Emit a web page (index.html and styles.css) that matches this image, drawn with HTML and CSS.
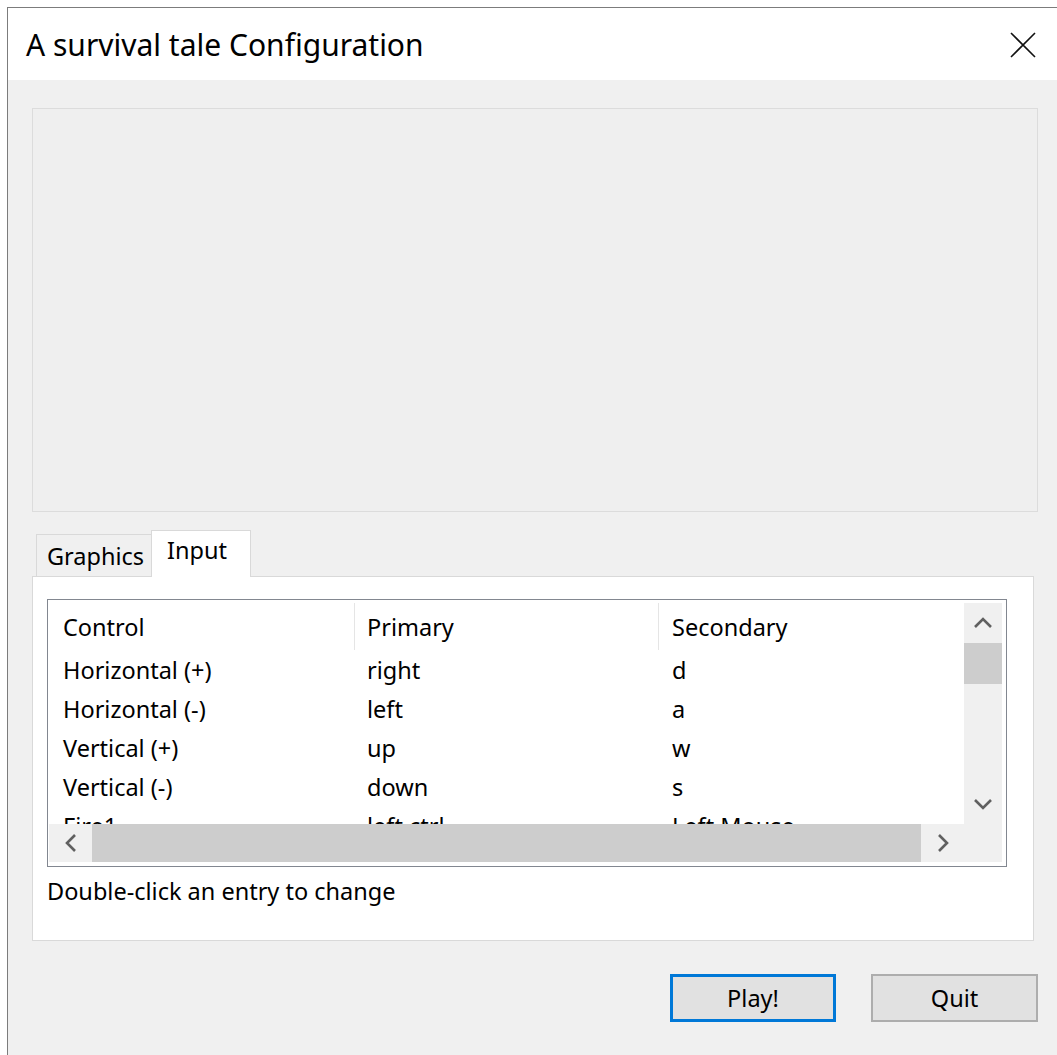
FILE: index.html
```html
<!DOCTYPE html>
<html lang="en">
<head>
<meta charset="utf-8">
<title>A survival tale Configuration</title>
<link rel="stylesheet" href="styles.css">
</head>
<body>
<div class="window">
  <div class="titlebar">
    <span class="title">A survival tale Configuration</span>
    <svg class="close" width="26" height="26" viewBox="0 0 26 26">
      <path d="M1 1 L25 25 M25 1 L1 25" stroke="#111" stroke-width="1.6" fill="none"/>
    </svg>
  </div>
  <div class="client">
    <div class="banner"></div>

    <div class="tabs">
      <div class="tabstrip">
        <div class="tab">Graphics</div>
        <div class="tab active">Input</div>
      </div>
      <div class="tabpage">
        <div class="listview">
          <div class="lv-body">
            <div class="lv-content">
              <div class="lv-row lv-head">
                <div class="cell c1">Control</div>
                <div class="cell c2">Primary</div>
                <div class="cell c3">Secondary</div>
              </div>
              <div class="lv-row">
                <div class="cell c1">Horizontal (+)</div>
                <div class="cell c2">right</div>
                <div class="cell c3">d</div>
              </div>
              <div class="lv-row">
                <div class="cell c1">Horizontal (-)</div>
                <div class="cell c2">left</div>
                <div class="cell c3">a</div>
              </div>
              <div class="lv-row">
                <div class="cell c1">Vertical (+)</div>
                <div class="cell c2">up</div>
                <div class="cell c3">w</div>
              </div>
              <div class="lv-row">
                <div class="cell c1">Vertical (-)</div>
                <div class="cell c2">down</div>
                <div class="cell c3">s</div>
              </div>
              <div class="lv-row">
                <div class="cell c1">Fire1</div>
                <div class="cell c2">left ctrl</div>
                <div class="cell c3">Left Mouse</div>
              </div>
            </div>
            <div class="vscroll">
              <div class="sb-btn v">
                <svg width="20" height="12" viewBox="0 0 20 12"><path d="M2 10 L10 2 L18 10" stroke="#606060" stroke-width="2.6" fill="none"/></svg>
              </div>
              <div class="vthumb"></div>
              <div class="vtrack"></div>
              <div class="sb-btn v">
                <svg width="20" height="12" viewBox="0 0 20 12"><path d="M2 2 L10 10 L18 2" stroke="#606060" stroke-width="2.6" fill="none"/></svg>
              </div>
            </div>
            <div class="hscroll">
              <div class="sb-btn h">
                <svg width="12" height="20" viewBox="0 0 12 20"><path d="M10 2 L2 10 L10 18" stroke="#606060" stroke-width="2.6" fill="none"/></svg>
              </div>
              <div class="hthumb"></div>
              <div class="sb-btn h">
                <svg width="12" height="20" viewBox="0 0 12 20"><path d="M2 2 L10 10 L2 18" stroke="#606060" stroke-width="2.6" fill="none"/></svg>
              </div>
            </div>
            <div class="corner"></div>
          </div>
        </div>
        <p class="hint">Double-click an entry to change</p>
      </div>
    </div>

    <div class="buttons">
      <button class="btn default">Play!</button>
      <button class="btn">Quit</button>
    </div>
  </div>
</div>
</body>
</html>
```

FILE: styles.css
```css
html, body {
  margin: 0;
  height: 100%;
  background: #ffffff;
  overflow: hidden;
}

body {
  font-family: "Noto Sans", "Open Sans", sans-serif;
  font-size: 23.5px;
  color: #000;
}

.window {
  margin: 7px 0 0 7px;
  height: calc(100% - 7px);
  border-left: 1px solid #7c7c7c;
  border-top: 1px solid #7c7c7c;
  display: flex;
  flex-direction: column;
}

/* caption bar */
.titlebar {
  height: 72px;
  flex: none;
  background: #ffffff;
  display: flex;
  align-items: center;
  justify-content: space-between;
  padding: 0 21px 0 18px;
}

.title {
  font-size: 30px;
  color: #000;
}

.close {
  display: block;
  margin-top: 2px;
}

/* dialog client area */
.client {
  flex: 1;
  background: #f0f0f0;
  padding: 28px 0 0 24px;
}

.banner {
  width: 1004px;
  height: 402px;
  border: 1px solid #dcdcdc;
  background: #efefef;
}

/* tab control */
.tabs {
  margin-top: 18px;
}

.tabstrip {
  display: flex;
  align-items: flex-end;
  height: 46px;
  padding-left: 4px;
}

.tab {
  box-sizing: border-box;
  height: 42px;
  width: 115px;
  border: 1px solid #d9d9d9;
  border-bottom: none;
  border-right: none;
  background: #f0f0f0;
  padding: 5px 0 0 10px;
  white-space: nowrap;
}

.tab.active {
  width: 100px;
  height: 47px;
  margin-bottom: -1px;
  background: #ffffff;
  border-right: 1px solid #d9d9d9;
  padding: 3px 0 0 15px;
  position: relative;
  z-index: 1;
}

.tabpage {
  width: 986px;
  height: 341px;
  border: 1px solid #d9d9d9;
  background: #ffffff;
  padding: 22px 0 0 14px;
}

/* list view */
.listview {
  width: 958px;
  height: 266px;
  border: 1px solid #828790;
}

.lv-body {
  margin: 3px 4px 4px 1px;
  height: 259px;
  display: grid;
  grid-template-columns: 1fr 38px;
  grid-template-rows: 1fr 38px;
}

.lv-content {
  overflow: hidden;
  background: #ffffff;
}

.lv-row {
  display: flex;
  height: 39px;
  align-items: center;
  white-space: nowrap;
}

.lv-head {
  height: 47px;
}

.cell {
  box-sizing: border-box;
  height: 100%;
  display: flex;
  align-items: center;
}

.c1 { width: 305px; padding-left: 14px; }
.c2 { width: 304px; padding-left: 13px; }
.c3 { width: 306px; padding-left: 14px; }

.lv-head .c2,
.lv-head .c3 {
  border-left: 1px solid #e5e5e5;
  padding-left: 12px;
}

.lv-head .c3 { padding-left: 13px; }

/* scroll bars */
.vscroll {
  background: #f0f0f0;
  display: flex;
  flex-direction: column;
}

.sb-btn {
  display: flex;
  align-items: center;
  justify-content: center;
  flex: none;
}

.sb-btn.v { height: 40px; }
.sb-btn.h { width: 43px; }

.vthumb {
  height: 41px;
  background: #cdcdcd;
  flex: none;
}

.vtrack { flex: 1; }

.hscroll {
  background: #f0f0f0;
  display: flex;
}

.hthumb {
  flex: 1;
  background: #cdcdcd;
}

.corner { background: #f0f0f0; }

.hint {
  margin: 10px 0 0 0;
  line-height: 28px;
}

/* dialog buttons */
.buttons {
  width: 1006px;
  margin-top: 33px;
  display: flex;
  justify-content: flex-end;
  gap: 35px;
}

.btn {
  font-family: inherit;
  font-size: 23.5px;
  color: #000;
  width: 167px;
  height: 48px;
  background: #e1e1e1;
  border: 2px solid #adadad;
  padding: 0;
}

.btn.default {
  width: 166px;
  border: 3px solid #0078d7;
}
```
